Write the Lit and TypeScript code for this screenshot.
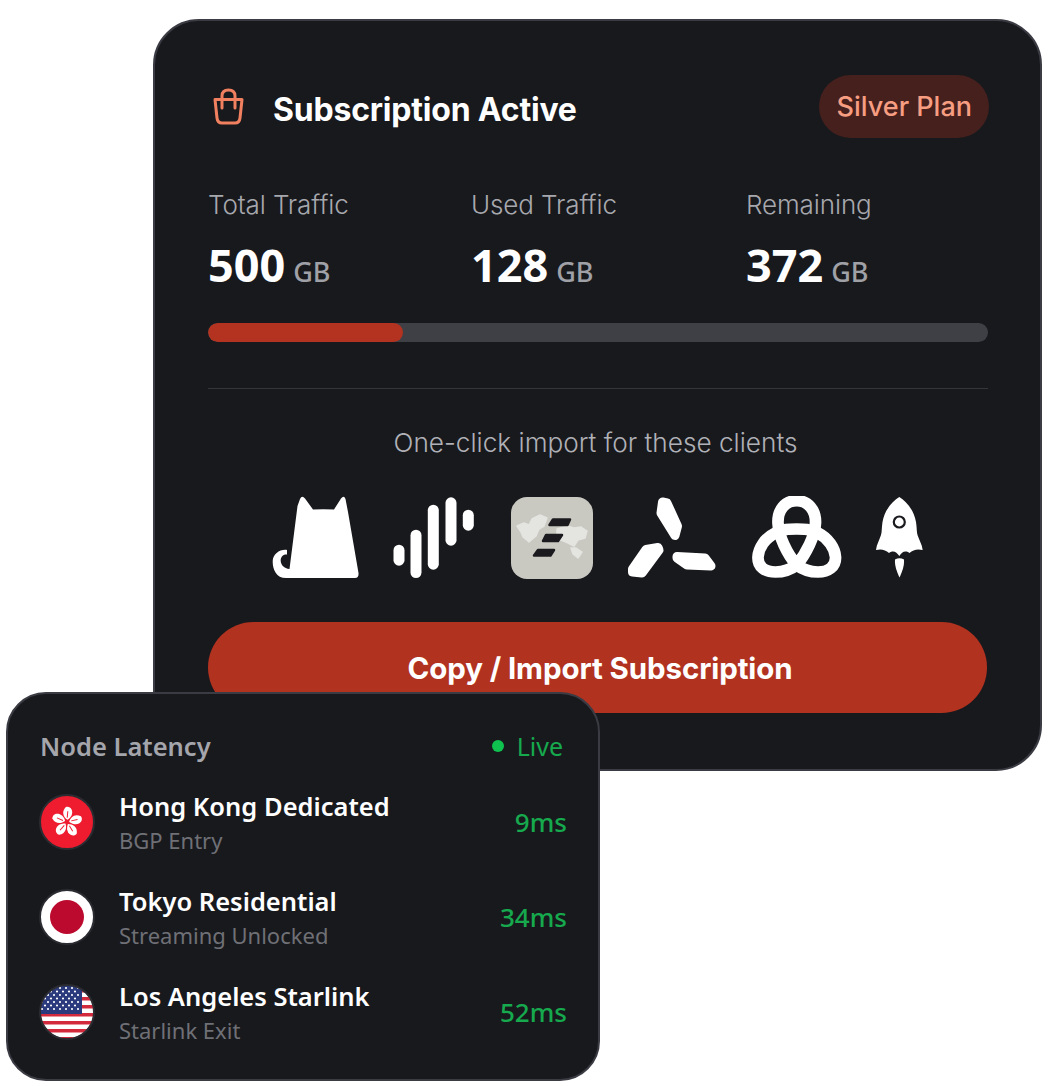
import { LitElement, html, css, svg } from "lit";
import { customElement } from "lit/decorators.js";

const stats = [
  { label: "Total Traffic", value: "500" },
  { label: "Used Traffic", value: "128" },
  { label: "Remaining", value: "372" },
];

const bars = [
  [6, 48.7, 69.7],
  [23, 33.7, 82],
  [40.3, 8.7, 73.7],
  [58, 1.3, 49.7],
  [75.3, 13.7, 34.7],
];

const catIcon = html`<svg class="ico" width="87" height="84" viewBox="0 0 87 84"><path fill="#fff" d="M28 3Q30 -1 33 2.500L41 13.500Q51 13 62 13.500L69 2.500Q72 -1 73.500 3L76 16 86.500 77Q87 82 83 82L14 82C4 82 .5 73 .7 65 1 58 8 53 15 54L15 58.500C11 58 8.500 61 8.700 65 9 69 12 72.500 17.500 73L25.500 10Z"/></svg>`;

const waveIcon = html`<svg class="ico" width="84" height="84" viewBox="0 0 84 84">${bars.map(
  ([x, a, b]) => svg`<rect x=${x - 5.5} y=${a} width="11" height=${b - a} rx="5.5" fill="#fff"/>`
)}</svg>`;

const mapIcon = html`<svg class="ico" width="82" height="84" viewBox="0 0 82 84">
  <rect x="0" y="1" width="82" height="82" rx="16" fill="#c9c8c1"/>
  <path fill="#e4e4e0" stroke="#e4e4e0" stroke-width="1.500" stroke-linejoin="round" d="M6 30 13 27 18 29 21 23 29 19 36 22 33 30 28 33 25 40 18 46 12 41 10 36ZM46 33 56 30 63 32 70 31 76 35 74 42 67 44 63 50 57 47 50 44 46 40ZM60 52 65 52 71 56 67 62 62 58Z"/>
  <path fill="#1b1b1f" stroke="#1b1b1f" stroke-width="2.500" stroke-linejoin="round" d="M42 23.500H59L56.500 29H38.500ZM35 39H51L47 45H32ZM27 54H43L39.500 59.500H23Z"/>
</svg>`;

const fanIcon = html`<svg class="ico" width="91" height="84" viewBox="0 0 91 84"><g fill="#fff" stroke="#fff" stroke-width="9" stroke-linejoin="round">
  <path d="M35.500 6 40 7 50.500 30 48 39.500 34 17Z"/>
  <path d="M19 53.500 31 51.500 32 54 15 77 5.500 76 5.500 73Z"/>
  <path d="M50 60.500 78 62 84 70 60 69 50 62Z"/>
</g></svg>`;

const knotIcon = html`<svg class="ico" width="90" height="84" viewBox="0 0 90 84"><g fill="none" stroke="#fff" stroke-width="11.700" stroke-linejoin="round">
  <path d="M44.700 4.700C56 4.700 64 14 63.500 27 63 40 54 58 44.700 69 35 58 26.500 40 26 27 25.500 14 33 4.700 44.700 4.700Z"/>
  <path d="M44.700 33C52 33 58 33 66 37 76 42 83 52 83.500 61 84 71 76 76 66 76 57 76 50 73 44.700 69 39.400 73 32 76 23.400 76 13 76 5.500 71 6 61 6.500 52 13 42 23.400 37 31 33 37 33 44.700 33Z"/>
</g></svg>`;

const rocketIcon = html`<svg class="ico" width="47" height="84" viewBox="0 0 47 84">
  <path fill="#fff" d="M23.300 1C30 5 38 14 40 26 41 32 40.500 36 41.500 39 43 44 46 48 46.700 54 41 52.500 37 54 33.500 57 29 54 26 56 23.300 60 20.500 56 17.500 54 13 57 9.500 54 5.500 52.500 0 54 .7 48 3.500 44 5 39 6 36 5.500 32 6.500 26 8.500 14 16.500 5 23.300 1Z"/>
  <circle cx="23.300" cy="26" r="5.500" fill="#fff" stroke="#1b1b1f" stroke-width="2.200"/>
  <path fill="#fff" d="M19 63.500Q23.500 61 28 63.500C28.500 70 26 76 23.500 81.500 21 76 18.500 70 19 63.500Z"/>
</svg>`;

const petal = svg`<path fill="#fff" d="M0-2C-4-4-7-8-3.500-13.500 0-15.500 4.500-12 3-6.500 2-4 1-3 0-2Z"/><path d="M-.5-4-1-10" stroke="#ee1c2e" stroke-width=".9" fill="none"/>`;
const hkFlag = html`<svg width="56" height="56" viewBox="0 0 56 56"><circle cx="28" cy="28" r="27" fill="#ee1c2e" stroke="#2b2c32" stroke-width="2"/>
  <g transform="translate(28 28) scale(1.080)">${[0, 72, 144, 216, 288].map(
    (r) => svg`<g transform="rotate(${r + 10})">${petal}</g>`
  )}</g></svg>`;
const jpFlag = html`<svg width="56" height="56" viewBox="0 0 56 56"><circle cx="28" cy="28" r="27" fill="#fff" stroke="#2b2c32" stroke-width="2"/><circle cx="28" cy="28" r="17" fill="#bc0a2e"/></svg>`;

const stripes = [0, 1, 2, 3, 4, 5, 6];
const stars: [number, number][] = [];
for (let r = 0; r < 7; r++) {
  for (let c = 0; c < (r % 2 ? 6 : 7); c++) {
    stars.push([3 + c * 6 + (r % 2 ? 3 : 0), 4 + r * 3.5]);
  }
}
const usFlag = html`<svg width="56" height="56" viewBox="0 0 56 56">
  <defs><clipPath id="us"><circle cx="28" cy="28" r="26.500"/></clipPath></defs>
  <g clip-path="url(#us)">
    <rect width="56" height="56" fill="#fff"/>
    ${stripes.map((i) => svg`<rect x="0" y=${5 + i * 8} width="56" height="3.5" fill="#d3293d"/>`)}
    <rect width="43" height="30" fill="#2a3a7c"/>
    ${stars.map(([x, y]) => svg`<circle cx=${x} cy=${y} r="1.1" fill="#fff"/>`)}
  </g>
  <circle cx="28" cy="28" r="27" fill="none" stroke="#2b2c32" stroke-width="2"/>
</svg>`;

const nodes = [
  { flag: hkFlag, name: "Hong Kong Dedicated", sub: "BGP Entry", ms: "9ms" },
  { flag: jpFlag, name: "Tokyo Residential", sub: "Streaming Unlocked", ms: "34ms" },
  { flag: usFlag, name: "Los Angeles Starlink", sub: "Starlink Exit", ms: "52ms" },
];

@customElement("app-root")
export class AppRoot extends LitElement {
  static styles = css`
    :host {
      display: block;
      position: relative;
      height: 1086px;
      width: 1057px;
      overflow: hidden;
      background: #fff;
      font-family: Inter, "Liberation Sans", sans-serif;
    }
    .main {
      box-sizing: border-box;
      margin: 19px 0 0 153px;
      width: 889px;
      height: 752px;
      border: 2px solid #3a3b43;
      border-radius: 46px;
      background: #18191d;
      padding: 54px 52px 0 53px;
      display: flex;
      flex-direction: column;
    }
    .head {
      display: flex;
      align-items: center;
      justify-content: space-between;
      height: 63px;
    }
    .head-left {
      display: flex;
      align-items: center;
      gap: 29px;
      padding-left: 5px;
    }
    .title {
      font-size: 32px;
      font-weight: 700;
      color: #fff;
      letter-spacing: -0.2px;
      padding-top: 6px;
    }
    .badge {
      display: flex;
      align-items: center;
      height: 63px;
      padding: 0 17px 0 18px;
      margin-right: -1px;
      border-radius: 32px;
      background: #45201d;
      color: #f79d81;
      font-size: 27px;
      font-weight: 500;
    }
    .stats {
      display: grid;
      grid-template-columns: 263px 275px auto;
      margin-top: 51px;
    }
    .label {
      font-size: 26px;
      color: #a7a8ae;
      font-weight: 300;
      line-height: 32px;
      letter-spacing: -0.1px;
    }
    .val {
      display: flex;
      align-items: baseline;
      gap: 8px;
      margin-top: 14px;
      height: 60px;
      line-height: 60px;
    }
    .num {
      font-family: "Noto Sans", sans-serif;
      font-size: 45px;
      font-weight: 700;
      color: #fff;
    }
    .unit {
      font-family: "Noto Sans", sans-serif;
      font-size: 27px;
      color: #a0a1a7;
      font-weight: 500;
    }
    .track {
      margin-top: 28px;
      height: 19px;
      border-radius: 10px;
      background: #3f4046;
      overflow: hidden;
    }
    .fill {
      height: 100%;
      border-radius: 10px;
      background: #b33220;
    }
    .rule {
      margin-top: 46px;
      height: 1px;
      background: #35363b;
    }
    .hint {
      margin-top: 38px;
      padding-right: 5px;
      text-align: center;
      font-size: 26.200px;
      font-weight: 300;
      line-height: 32px;
      color: #b0b1b7;
    }
    .clients {
      display: flex;
      justify-content: center;
      gap: 34px;
      padding-right: 1px;
      margin-top: 37px;
      height: 84px;
    }
    .ico {
      display: block;
      flex: none;
    }
    .btn {
      margin-top: 42px;
      height: 91px;
      width: 779px;
      box-sizing: border-box;
      padding-left: 5px;
      border-radius: 46px;
      background: #b23220;
      color: #fff;
      font-size: 29.500px;
      font-weight: 700;
      display: flex;
      align-items: center;
      justify-content: center;
      letter-spacing: -0.1px;
    }
    .nodes {
      box-sizing: border-box;
      position: absolute;
      left: 6px;
      top: 692px;
      width: 594px;
      height: 389px;
      border: 2px solid #3a3b43;
      border-radius: 40px;
      background: #18191d;
      padding: 33px 31px 0 31px;
      font-family: "Noto Sans", sans-serif;
    }
    .nhead {
      display: flex;
      justify-content: space-between;
      align-items: center;
      height: 38px;
      padding: 0 4px 0 1px;
    }
    .nt {
      font-size: 25.500px;
      font-weight: 600;
      color: #a5a6ac;
    }
    .live {
      display: flex;
      align-items: center;
      gap: 13px;
      font-size: 25px;
      color: #16a94e;
    }
    .dot {
      width: 12px;
      height: 12px;
      border-radius: 50%;
      background: #0fc24f;
    }
    .rows {
      display: flex;
      flex-direction: column;
      gap: 22px;
      margin-top: 20px;
    }
    .row {
      display: flex;
      align-items: center;
      height: 73px;
    }
    .flag {
      width: 56px;
      height: 56px;
      flex: none;
      display: block;
    }
    .flag svg {
      display: block;
    }
    .meta {
      margin-left: 24px;
      flex: 1;
      margin-top: 2px;
    }
    .name {
      font-size: 25.500px;
      font-weight: 600;
      color: #fff;
      line-height: 36px;
    }
    .sub {
      font-size: 22px;
      color: #6f7076;
      line-height: 33px;
    }
    .ms {
      font-size: 26px;
      font-weight: 500;
      color: #16a94e;
    }
  `;

  render() {
    return html`
      <section class="main">
        <div class="head">
          <div class="head-left">
            <svg width="31" height="37" viewBox="0 0 31 37" fill="none" stroke="#f0805f" stroke-width="3" stroke-linecap="round" stroke-linejoin="round">
              <path d="M2 11.500H29L27 30Q26.500 35 22 35H9Q4.500 35 4 30Z"/>
              <path d="M9 20V8Q9 2 15.500 2T22 8V20"/>
            </svg>
            <span class="title">Subscription Active</span>
          </div>
          <div class="badge">Silver Plan</div>
        </div>
        <div class="stats">
          ${stats.map(
            (s) => html`<div>
              <div class="label">${s.label}</div>
              <div class="val"><span class="num">${s.value}</span><span class="unit">GB</span></div>
            </div>`
          )}
        </div>
        <div class="track"><div class="fill" style="width:25%"></div></div>
        <div class="rule"></div>
        <div class="hint">One-click import for these clients</div>
        <div class="clients">${catIcon}${waveIcon}${mapIcon}${fanIcon}${knotIcon}${rocketIcon}</div>
        <div class="btn">Copy / Import Subscription</div>
      </section>
      <section class="nodes">
        <div class="nhead">
          <span class="nt">Node Latency</span>
          <span class="live"><i class="dot"></i>Live</span>
        </div>
        <div class="rows">
          ${nodes.map(
            (n) => html`<div class="row">
              <div class="flag">${n.flag}</div>
              <div class="meta">
                <div class="name">${n.name}</div>
                <div class="sub">${n.sub}</div>
              </div>
              <div class="ms">${n.ms}</div>
            </div>`
          )}
        </div>
      </section>
    `;
  }
}
